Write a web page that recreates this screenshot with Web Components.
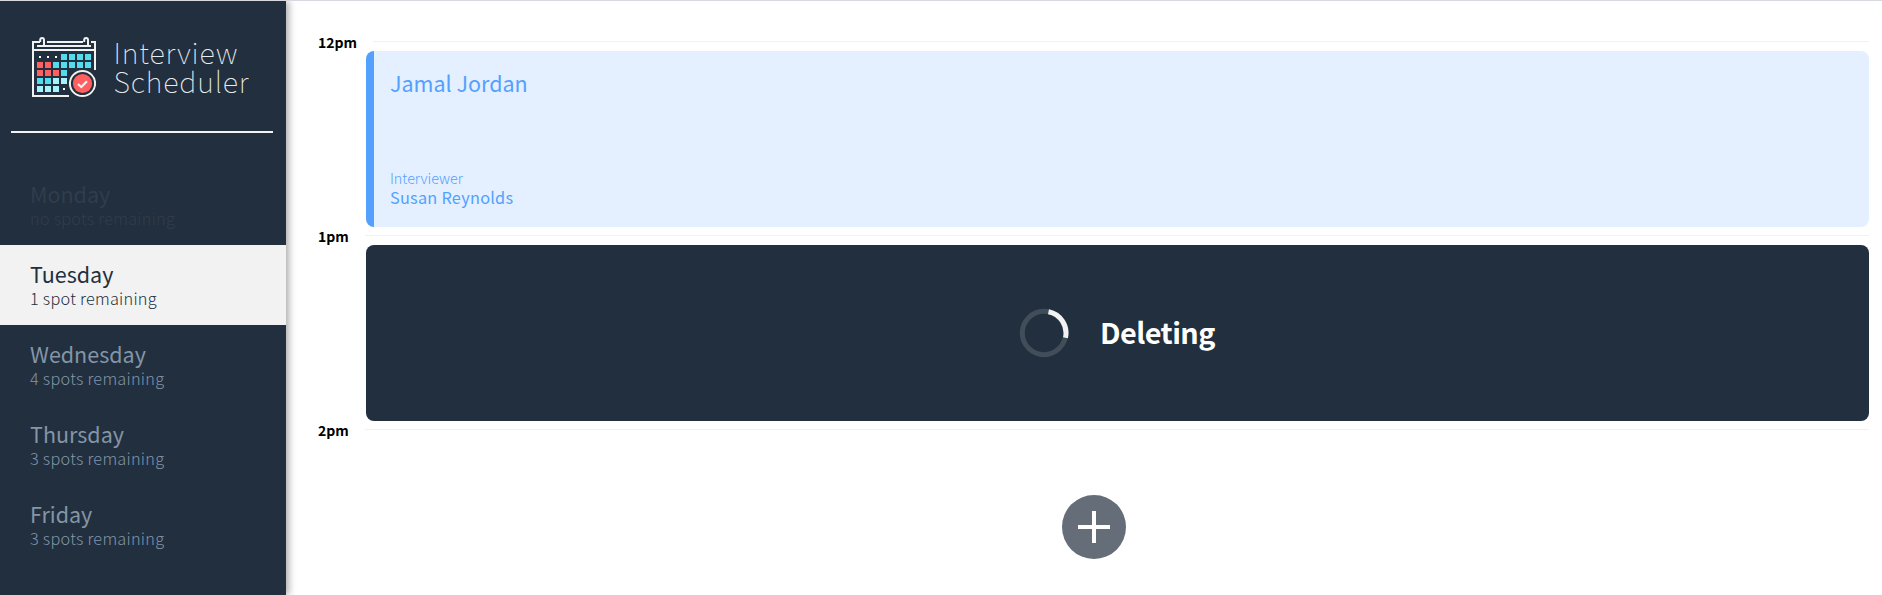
<!DOCTYPE html>
<html lang="en">
<head>
<meta charset="utf-8">
<title>Interview Scheduler</title>
<style>
html,body{margin:0;height:100%;overflow:hidden;background:#fff}
body{font-family:"Noto Sans CJK SC","Noto Sans CJK JP","Open Sans",sans-serif}
</style>
</head>
<body>
<scheduler-app>
  <scheduler-sidebar slot="side">
    <day-item state="full"><span slot="name">Monday</span><span slot="spots">no spots remaining</span></day-item>
    <day-item state="selected"><span slot="name">Tuesday</span><span slot="spots">1 spot remaining</span></day-item>
    <day-item><span slot="name">Wednesday</span><span slot="spots">4 spots remaining</span></day-item>
    <day-item><span slot="name">Thursday</span><span slot="spots">3 spots remaining</span></day-item>
    <day-item><span slot="name">Friday</span><span slot="spots">3 spots remaining</span></day-item>
  </scheduler-sidebar>
  <time-slot wide><span slot="time">12pm</span><appointment-card><span slot="student">Jamal Jordan</span><span slot="interviewer">Susan Reynolds</span></appointment-card></time-slot>
  <time-slot><span slot="time">1pm</span><status-card>Deleting</status-card></time-slot>
  <time-slot><span slot="time">2pm</span><add-button></add-button></time-slot>
</scheduler-app>
<script>
function define(name, html, setup) {
  const template = document.createElement('template');
  template.innerHTML = html;
  customElements.define(name, class extends HTMLElement {
    constructor() {
      super();
      this.attachShadow({mode: 'open'}).append(template.content.cloneNode(true));
      if (setup) setup(this.shadowRoot);
    }
  });
}

define('scheduler-app', `<style>
:host{display:flex;box-sizing:border-box;height:100vh;overflow:hidden;border-top:1px solid #d8d9de;background:#fff}
main{flex:1;min-width:0;padding:40px 13px 0 32px;box-sizing:border-box}
</style><slot name="side"></slot><main><slot></slot></main>`);

define('scheduler-sidebar', `<style>
:host{display:block;flex:none;width:286px;background:#222f3e;box-shadow:3px 0 7px rgba(0,0,0,.32)}
hr{border:0;height:2px;margin:0 13px 32px 11px;background:#f2f2f2}
</style><scheduler-logo></scheduler-logo><hr><nav><slot></slot></nav>`);

define('scheduler-logo', `<style>
:host{display:flex;box-sizing:border-box;height:130px;padding:36px 0 0 32px;gap:17.5px}
svg{display:block;flex:none}
.words{color:#e9ebed;font-size:28.8px;line-height:29px;font-weight:100;letter-spacing:.85px;white-space:nowrap}
</style>
<svg width="64" height="61" viewBox="0 0 64 61" fill="none" stroke="#f2f2f2" stroke-width="2">
<path d="M8 5H1V59H37M15 5H51M59 5H63V33M5 9H59M1 13H63"/>
<path d="M8.2 5V3A1.9 1.9 0 0 1 12 3V9M52.2 5V3A1.9 1.9 0 0 1 56 3V9"/>
<g class="cells" stroke="none"></g>
<circle cx="50.5" cy="46.5" r="12.6" fill="#222f3e"/>
<circle cx="50.5" cy="46.5" r="9.6" fill="#ff5f5f" stroke="none"/>
<path d="M46 47L49.3 50L55 44.3" stroke-width="2.2"/>
</svg>
<div class="words">Interview<br>Scheduler</div>`, root => {
  const rows = ['...cccc', 'rrccccc', 'rrrc', 'ccll', 'lll.'];
  const fill = {c: '#54dbee', r: '#ff5f5f', l: '#a5f3fa'};
  let out = '';
  rows.forEach((row, j) => [...row].forEach((c, i) => {
    const x = 5 + i * 8, y = 17 + j * 8;
    out += c === '.' ? `<rect x="${x + 2}" y="${y + 2}" width="2" height="2" fill="#fff"/>`
      : `<rect x="${x}" y="${y}" width="6" height="6" fill="${fill[c]}"/>`;
  }));
  root.querySelector('.cells').innerHTML = out;
});

define('day-item', `<style>
:host{display:block;box-sizing:border-box;height:80px;padding:17px 0 0 30px;color:#8395a7;background:#222f3e;white-space:nowrap}
:host([state=full]){color:#303d4c}
:host([state=selected]){background:#f2f2f2;color:#222f3e}
.n{font-size:21.5px;line-height:24px}
.s{font-size:16.3px;line-height:24px;font-weight:300;letter-spacing:.25px}
</style><div class="n"><slot name="name"></slot></div><div class="s"><slot name="spots"></slot></div>`);

define('time-slot', `<style>
:host{display:block;height:194px}
header{display:flex;justify-content:space-between;height:10px}
.t{font-weight:700;font-size:14px;line-height:20px;margin-top:-9px;height:20px;color:#000}
.l{width:1504px;height:1px;background:#f2f2f2}
:host([wide]) .l{width:1496px}
.c{display:block;margin-left:48px}
</style><header><div class="t"><slot name="time"></slot></div><div class="l"></div></header><div class="c"><slot></slot></div>`);

define('appointment-card', `<style>
:host{display:flex;flex-direction:column;box-sizing:border-box;height:176px;padding:20px 0 20px 16px;border-left:8px solid #54a0ff;border-radius:8px;background:#e4f0ff;color:#54a0ff;white-space:nowrap}
.n{font-size:21.5px;line-height:24px}
.i{margin-top:auto;font-size:14.4px;line-height:19px;font-weight:300;letter-spacing:-.05px}
.p{font-size:16.3px;line-height:20px;letter-spacing:.25px}
</style><div class="n"><slot name="student"></slot></div><div class="i">Interviewer</div><div class="p"><slot name="interviewer"></slot></div>`);

define('status-card', `<style>
:host{display:flex;align-items:center;justify-content:center;gap:31px;height:176px;border-radius:8px;background:#222f3e;color:#fff;font-size:28.8px;font-weight:700;letter-spacing:-.55px;line-height:40px}
svg{display:block}
div{padding:0 1px 3px 0}
</style><svg width="50" height="50" viewBox="0 0 50 50" fill="none" stroke-width="5"><circle cx="25" cy="25" r="21.7" stroke="#414d58"/><path d="M29.5 3.8A21.7 21.7 0 0 1 46.5 29.8" stroke="#f2f2f2"/></svg><div><slot></slot></div>`);

define('add-button', `<style>
:host{display:flex;justify-content:center;padding:56px 48px 0 0}
svg{display:block}
</style><svg width="64" height="64"><circle cx="32" cy="32" r="32" fill="#646d78"/><path d="M16 32H48M32 16V48" stroke="#fff" stroke-width="4"/></svg>`);
</script>
</body>
</html>
